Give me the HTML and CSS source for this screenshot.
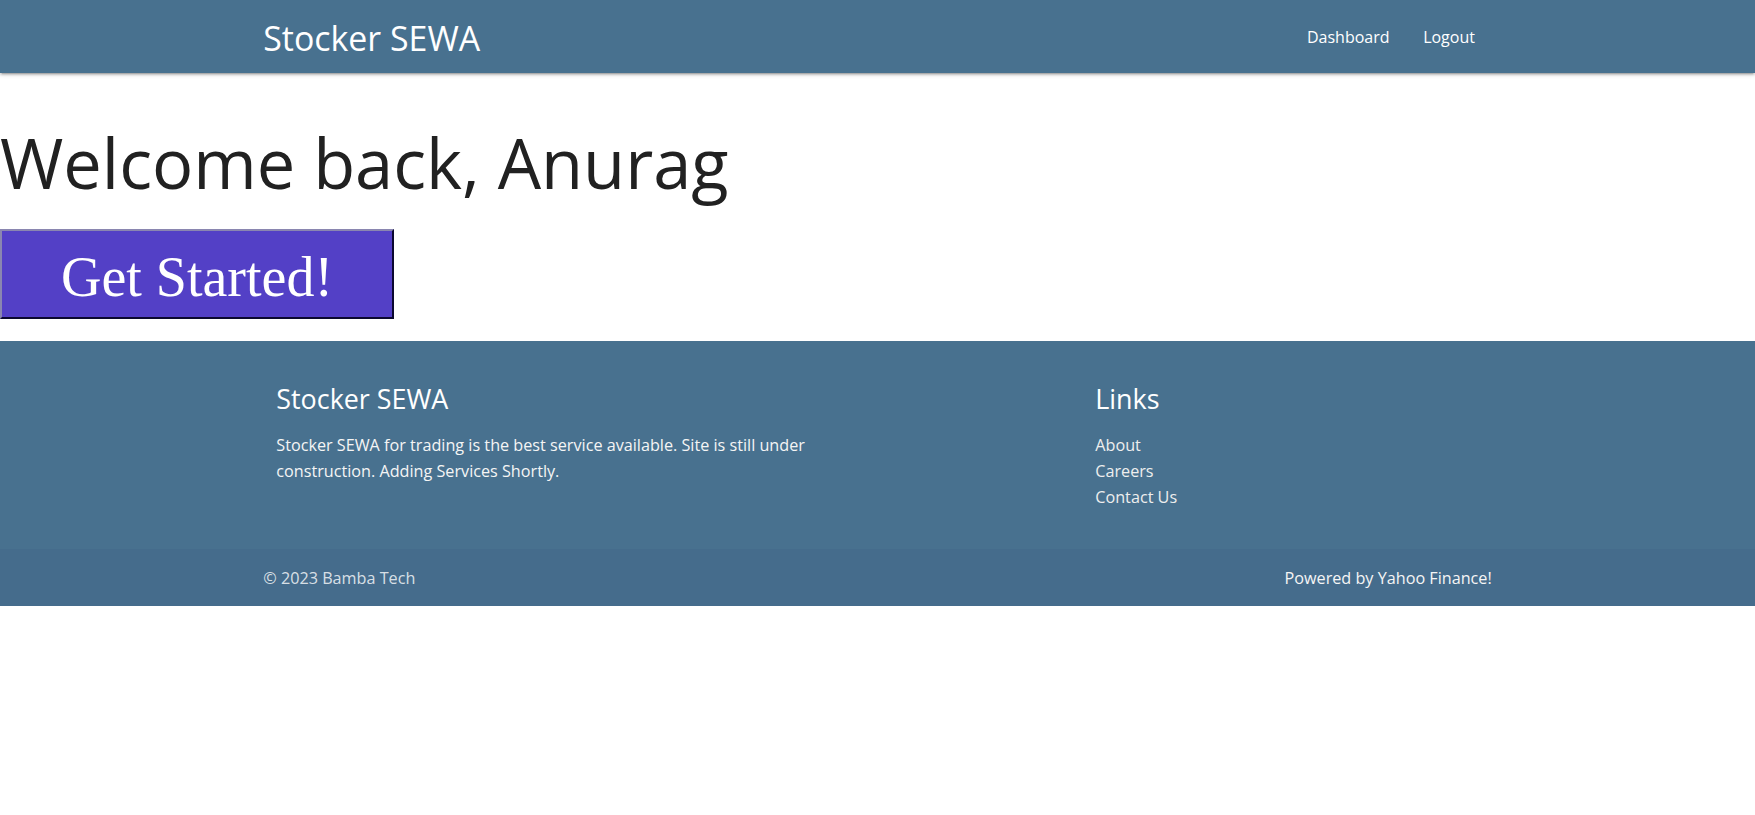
FILE: index.html
```html
<!DOCTYPE html>
<html lang="en">
<head>
<meta charset="utf-8">
<title>Stocker SEWA</title>
<link rel="stylesheet" href="styles.css">
</head>
<body>
<nav class="navbar">
  <div class="container nav-wrapper">
    <a class="brand-logo" href="#">Stocker SEWA</a>
    <ul class="nav-links">
      <li><a href="#">Dashboard</a></li>
      <li><a href="#">Logout</a></li>
    </ul>
  </div>
</nav>
<main class="main">
  <h1 class="welcome">Welcome back, Anurag</h1>
  <button class="start-btn" type="button">Get Started!</button>
</main>
<footer class="page-footer">
  <div class="container">
    <div class="footer-row">
      <div class="col col-about">
        <h5 class="footer-title">Stocker SEWA</h5>
        <p class="footer-text">Stocker SEWA for trading is the best service available. Site is still under construction. Adding Services Shortly.</p>
      </div>
      <div class="col col-links">
        <h5 class="footer-title">Links</h5>
        <ul class="footer-links">
          <li><a href="#">About</a></li>
          <li><a href="#">Careers</a></li>
          <li><a href="#">Contact Us</a></li>
        </ul>
      </div>
    </div>
  </div>
  <div class="footer-copyright">
    <div class="container copy-inner">
      <span class="copy-left">© 2023 Bamba Tech</span>
      <a class="copy-right" href="#">Powered by Yahoo Finance!</a>
    </div>
  </div>
</footer>
</body>
</html>
```
FILE: styles.css
```css
html {
  box-sizing: border-box;
}
*, *::before, *::after {
  box-sizing: inherit;
}
body {
  margin: 0;
  font-family: "Open Sans", "Noto Sans", sans-serif;
  font-size: 16.2px;
  line-height: 1.5;
  color: rgba(0, 0, 0, 0.87);
  background: #ffffff;
}
a {
  text-decoration: none;
  color: inherit;
}
.container {
  width: 70%;
  margin: 0 auto;
}

/* Navbar */
.navbar {
  height: 73px;
  background-color: #48718f;
  color: #ffffff;
  box-shadow: 0 2px 2px 0 rgba(0, 0, 0, 0.14), 0 3px 1px -2px rgba(0, 0, 0, 0.12), 0 1px 5px 0 rgba(0, 0, 0, 0.2);
  position: relative;
  z-index: 2;
}
.nav-wrapper {
  height: 73px;
  display: flex;
  align-items: center;
  justify-content: space-between;
}
.brand-logo {
  font-size: 33.9px;
  line-height: 72px;
  padding-top: 3px;
  color: #ffffff;
}
.nav-links {
  list-style: none;
  margin: 0;
  padding: 0;
  display: flex;
}
.nav-links a {
  display: block;
  padding: 0 16.8px;
  line-height: 72px;
  padding-top: 1px;
  font-size: 16px;
  color: #ffffff;
}

/* Main */
.main {
  padding-bottom: 22px;
}
.welcome {
  margin: 52px 0 29px;
  font-size: 68.6px;
  font-weight: 400;
  line-height: 1.1;
  color: #212121;
}
.start-btn {
  display: block;
  margin: 0;
  width: 394px;
  height: 90px;
  padding: 14px 0 8px;
  font-family: "Liberation Serif", "Times New Roman", serif;
  font-size: 56px;
  line-height: 64px;
  color: #ffffff;
  background-color: #5340c6;
  border-width: 2px;
  border-style: solid;
  border-color: #8a86b0 #0b0830 #0b0830 #8a86b0;
  text-align: center;
}

/* Footer */
.page-footer {
  background-color: #48718f;
  padding-top: 22px;
  color: #ffffff;
}
.footer-row {
  display: grid;
  grid-template-columns: 6fr 2fr 4fr;
  margin-bottom: 22px;
}
.col {
  padding: 0 13px;
}
.col-links {
  grid-column: 3;
}
.footer-title {
  margin: 21px 0 11px;
  font-size: 26.9px;
  font-weight: 400;
  line-height: 1.1;
  color: #ffffff;
}
.footer-text {
  margin: 17.5px 0;
  line-height: 26px;
  color: #f5f5f5;
}
.footer-links {
  list-style: none;
  padding: 0;
  margin: 17.5px 0;
  line-height: 26px;
}
.footer-links a {
  color: #eeeeee;
}
.footer-copyright {
  height: 57px;
  display: flex;
  align-items: center;
  background-color: #456c8c;
}
.copy-inner {
  display: flex;
  justify-content: space-between;
  align-items: center;
  padding-top: 2px;
}
.copy-left {
  color: rgba(255, 255, 255, 0.8);
}
.copy-right {
  color: #f5f5f5;
}
```
